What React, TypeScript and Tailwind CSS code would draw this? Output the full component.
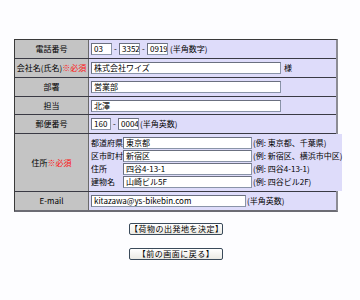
const font = { fontFamily: '"Noto Sans CJK JP", "MS PGothic", sans-serif' };

type Row = { label: React.ReactNode; h: string; body: React.ReactNode };

function Box({ w, value }: { w: string; value?: string }) {
  return (
    <div
      className={`${w} h-[12px] bg-white border border-[#8a94a8] border-t-[#6b7080] border-l-[#6b7080] px-[2px] text-[8px] leading-[10px] whitespace-nowrap overflow-hidden`}
    >
      {value}
    </div>
  );
}

function Dash() {
  return <span className="w-[7px] text-center text-[8px]">-</span>;
}

function Required() {
  return <span className="text-[#ff1010]">※必須</span>;
}

const address = [
  { name: '都道府県', value: '東京都', hint: '(例: 東京都、千葉県)' },
  { name: '区市町村', value: '新宿区', hint: '(例: 新宿区、横浜市中区)' },
  { name: '住所', value: '四谷4-13-1', hint: '(例: 四谷4-13-1)' },
  { name: '建物名', value: '山崎ビル5F', hint: '(例: 四谷ビル2F)' },
];

const rows: Row[] = [
  {
    label: '電話番号',
    h: 'h-[18px]',
    body: (
      <div className="flex items-center">
        <Box w="w-[21px]" value="03" />
        <Dash />
        <Box w="w-[21px]" value="3352" />
        <Dash />
        <Box w="w-[21px]" value="0919" />
        <span className="ml-[2px]">(半角数字)</span>
      </div>
    ),
  },
  {
    label: (
      <>
        会社名(氏名)<Required />
      </>
    ),
    h: 'h-[19px]',
    body: (
      <div className="flex items-center">
        <Box w="w-[190px]" value="株式会社ワイズ" />
        <span className="ml-[3px]">様</span>
      </div>
    ),
  },
  { label: '部署', h: 'h-[19px]', body: <Box w="w-[190px]" value="営業部" /> },
  { label: '担当', h: 'h-[18px]', body: <Box w="w-[190px]" value="北澤" /> },
  {
    label: '郵便番号',
    h: 'h-[19px]',
    body: (
      <div className="flex items-center">
        <Box w="w-[20px]" value="160" />
        <Dash />
        <Box w="w-[21px]" value="0004" />
        <span className="ml-[1px]">(半角英数)</span>
      </div>
    ),
  },
  {
    label: (
      <>
        住所<Required />
      </>
    ),
    h: 'h-[58px]',
    body: (
      <div className="flex flex-col gap-[1px]">
        {address.map((a) => (
          <div key={a.name} className="flex items-center h-[12px]">
            <span className="w-[32px] whitespace-nowrap">{a.name}</span>
            <Box w="w-[129px]" value={a.value} />
            <span className="ml-[1px] whitespace-nowrap">{a.hint}</span>
          </div>
        ))}
      </div>
    ),
  },
  {
    label: 'E-mail',
    h: 'h-[19px]',
    body: (
      <div className="flex items-center">
        <Box w="w-[155px]" value="kitazawa@ys-bikebin.com" />
        <span className="ml-[1px]">(半角英数)</span>
      </div>
    ),
  },
];

function Btn({ children }: { children: React.ReactNode }) {
  return (
    <button className="w-[94px] h-[12px] rounded-[2px] border border-[#3a4a5a] bg-gradient-to-b from-white to-[#ebeae4] text-[8px] leading-[10px] text-black tracking-[0.5px]">
      {children}
    </button>
  );
}

export default function App() {
  return (
    <div className="w-[360px] h-[300px] bg-[#fdfdff] pt-[39px] pl-[14px] text-[8px] text-black" style={font}>
      <div className="w-[324px] border-t border-l border-[#3a3a3a] border-r-2 border-r-[#8c8c94] border-b-2 border-b-[#6c6c74]">
        {rows.map((r, i) => (
          <div key={i} className={`flex ${r.h} ${i > 0 ? 'border-t border-[#3a3a44]' : ''}`}>
            <div className="w-[74px] shrink-0 bg-[#c4c4c4] border-r border-[#6a6a6a] flex items-center justify-center whitespace-nowrap">
              {r.label}
            </div>
            <div className="flex-1 bg-[#dedcfa] pl-[2px] flex items-center">{r.body}</div>
          </div>
        ))}
      </div>
      <div className="w-[324px] flex flex-col items-center gap-[13px] mt-[11px]">
        <Btn>【荷物の出発地を決定】</Btn>
        <Btn>【前の画面に戻る】</Btn>
      </div>
    </div>
  );
}
